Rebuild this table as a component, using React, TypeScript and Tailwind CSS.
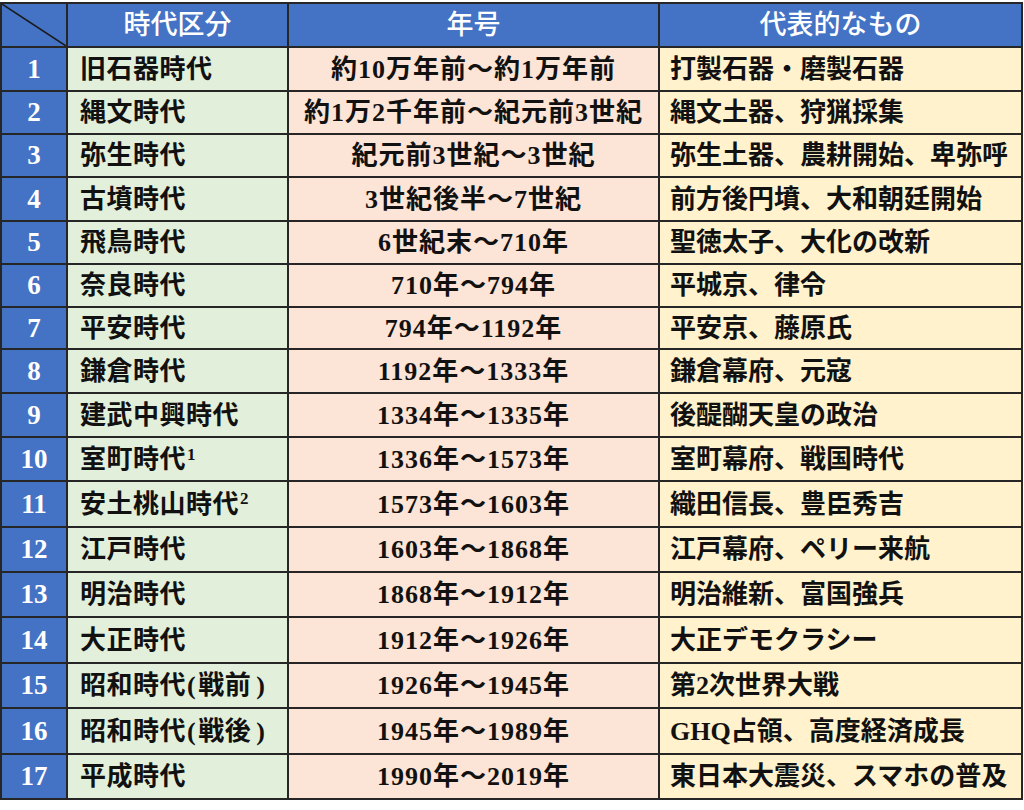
import React from 'react'

type Row = { no: string; era: string; sup?: string; note?: string; years: string; items: string }

const rows: Row[] = [
  { no: '1', era: '旧石器時代', years: '約10万年前～約1万年前', items: '打製石器・磨製石器' },
  { no: '2', era: '縄文時代', years: '約1万2千年前～紀元前3世紀', items: '縄文土器、狩猟採集' },
  { no: '3', era: '弥生時代', years: '紀元前3世紀～3世紀', items: '弥生土器、農耕開始、卑弥呼' },
  { no: '4', era: '古墳時代', years: '3世紀後半～7世紀', items: '前方後円墳、大和朝廷開始' },
  { no: '5', era: '飛鳥時代', years: '6世紀末～710年', items: '聖徳太子、大化の改新' },
  { no: '6', era: '奈良時代', years: '710年～794年', items: '平城京、律令' },
  { no: '7', era: '平安時代', years: '794年～1192年', items: '平安京、藤原氏' },
  { no: '8', era: '鎌倉時代', years: '1192年～1333年', items: '鎌倉幕府、元寇' },
  { no: '9', era: '建武中興時代', years: '1334年～1335年', items: '後醍醐天皇の政治' },
  { no: '10', era: '室町時代', sup: '1', years: '1336年～1573年', items: '室町幕府、戦国時代' },
  { no: '11', era: '安土桃山時代', sup: '2', years: '1573年～1603年', items: '織田信長、豊臣秀吉' },
  { no: '12', era: '江戸時代', years: '1603年～1868年', items: '江戸幕府、ペリー来航' },
  { no: '13', era: '明治時代', years: '1868年～1912年', items: '明治維新、富国強兵' },
  { no: '14', era: '大正時代', years: '1912年～1926年', items: '大正デモクラシー' },
  { no: '15', era: '昭和時代', note: '戦前', years: '1926年～1945年', items: '第2次世界大戦' },
  { no: '16', era: '昭和時代', note: '戦後', years: '1945年～1989年', items: 'GHQ占領、高度経済成長' },
  { no: '17', era: '平成時代', years: '1990年～2019年', items: '東日本大震災、スマホの普及' },
]

export default function App() {
  return (
    <div className="w-[1024px] h-[810px] bg-white pt-[2px] font-['Liberation_Serif','Noto_Sans_CJK_JP',serif]">
      <div className="w-[1023px] grid grid-cols-[64px_219px_369px_361px] grid-rows-[42px_42px_41px_41px_42px_41px_41px_40px_42px_42px_42px_44px_43px_43px_44px_43px_44px_43px] gap-[2px] p-[2px] bg-[#262626]">
        {/* Header */}
        <div className="bg-[#4472c4]">
          <svg className="w-full h-full" viewBox="0 0 64 42" preserveAspectRatio="none">
            <line x1="0" y1="0" x2="64" y2="42" stroke="#1a1a1a" strokeWidth="1.5" />
          </svg>
        </div>
        <div className="bg-[#4472c4] flex items-center justify-center text-white text-[27px] font-medium">時代区分</div>
        <div className="bg-[#4472c4] flex items-center justify-center text-white text-[27px] font-medium">年号</div>
        <div className="bg-[#4472c4] flex items-center justify-center text-white text-[27px] font-medium">代表的なもの</div>

        {rows.map(r => (
          <React.Fragment key={r.no}>
            <div className="bg-[#4472c4] flex items-center justify-center text-white text-[27px] font-bold">{r.no}</div>
            <div className="bg-[#e2efda] flex items-center pl-[12px] text-[#111] text-[26px] font-bold tracking-[0.5px] whitespace-nowrap">
              {r.era}
              {r.note && (
                <>
                  <span className="pl-[1px] pr-[2px]">(</span>
                  {r.note}
                  <span className="pl-[5px]">)</span>
                </>
              )}
              {r.sup && <span className="text-[17px] self-start mt-[4px] ml-[1px]">{r.sup}</span>}
            </div>
            <div className="bg-[#fce4d6] flex items-center justify-center text-[#111] text-[26px] font-bold tracking-[1px] whitespace-nowrap">{r.years}</div>
            <div className="bg-[#fff2cc] flex items-center pl-[10px] text-[#111] text-[26px] font-bold whitespace-nowrap">{r.items}</div>
          </React.Fragment>
        ))}
      </div>
    </div>
  )
}
